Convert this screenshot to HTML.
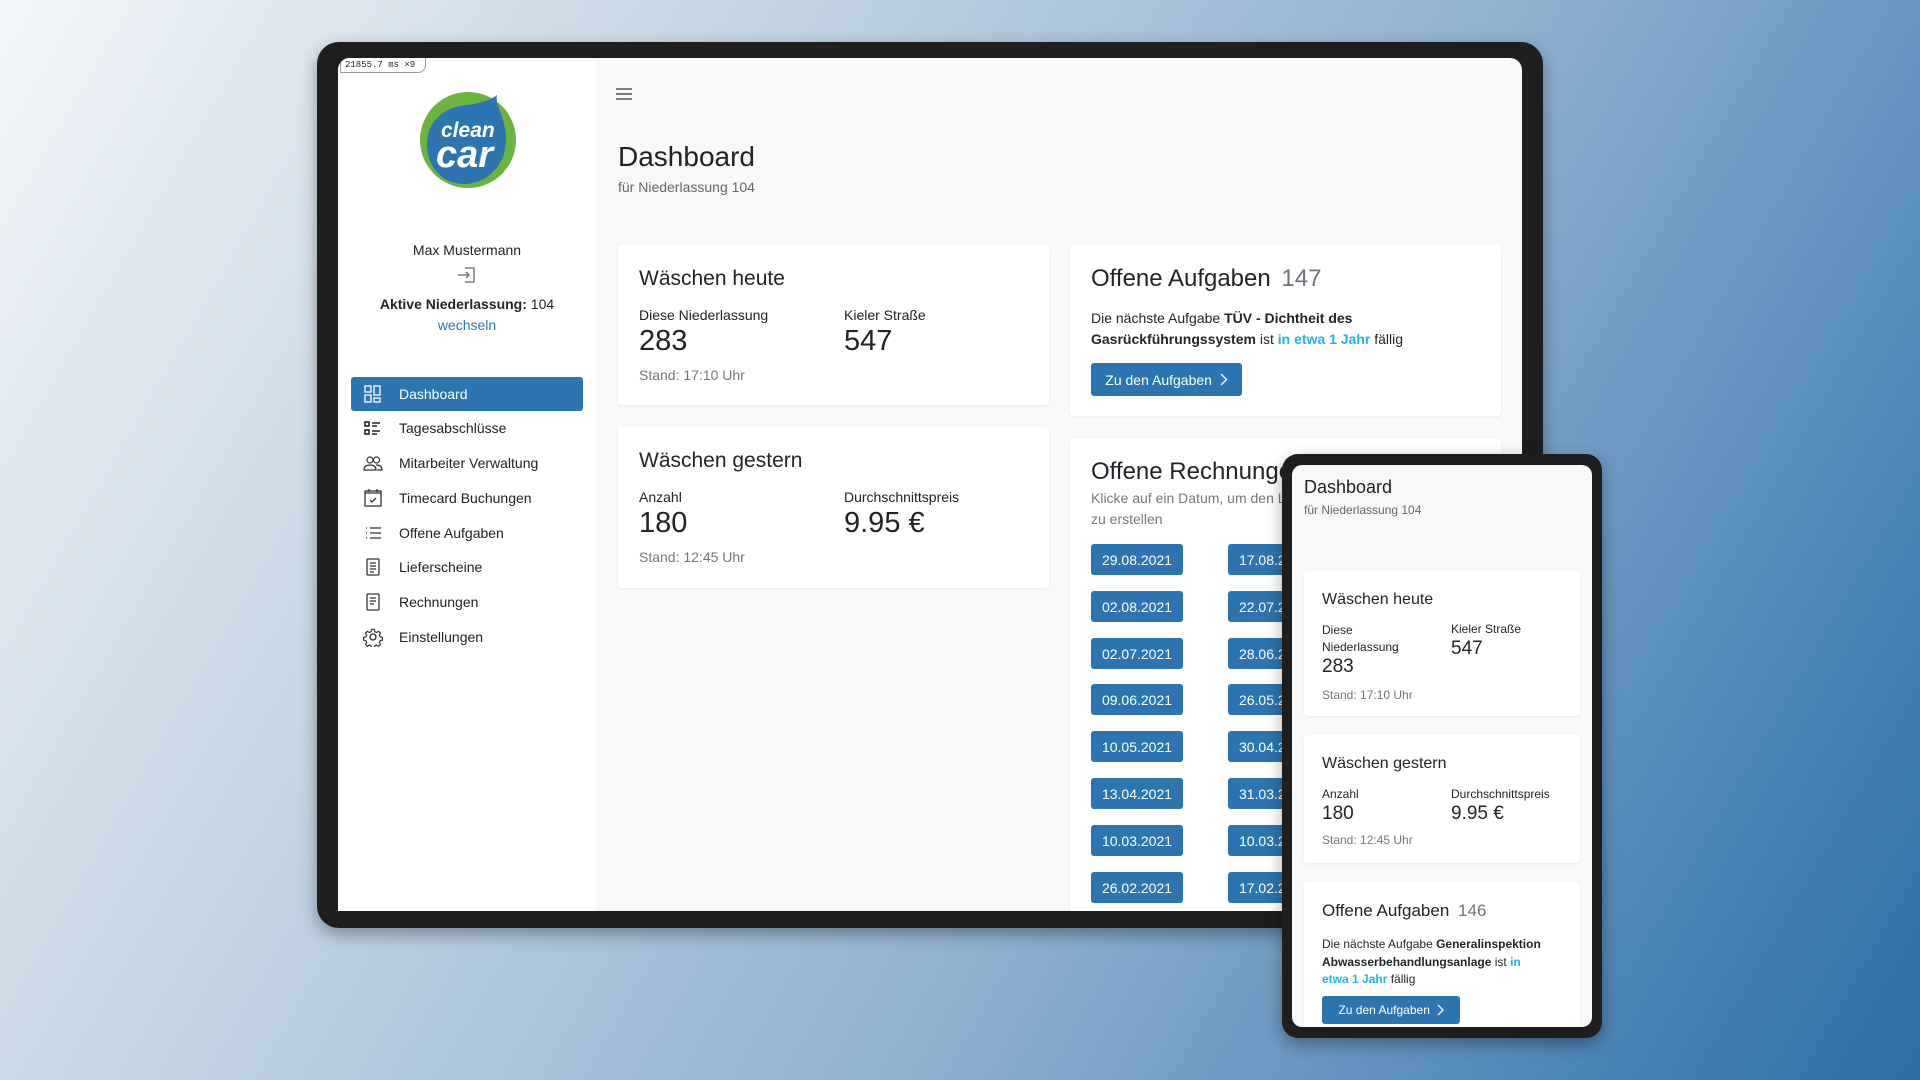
<!DOCTYPE html>
<html><head><meta charset="utf-8"><style>
*{box-sizing:border-box;margin:0;padding:0}
body{width:1920px;height:1080px;overflow:hidden;position:relative;font-family:"Liberation Sans",sans-serif;color:#212529;background:linear-gradient(120deg,#f2f5f8 0%,#c2d4e3 30%,#8fb1cf 60%,#5087b6 85%,#2f6da5 100%)}
.abs{position:absolute}
.frame{background:#1e1e1e;border-radius:22px;box-shadow:0 6px 16px rgba(0,0,0,.35)}
.scr{overflow:hidden;background:#f7f8fa}
.card{position:absolute;background:#fff;border-radius:4px;box-shadow:0 1px 3px rgba(0,0,0,.06)}
.btn{position:absolute;background:#2c75b0;color:#fff;border-radius:3px;font-size:14px;display:flex;align-items:center;justify-content:center}
.nav{position:absolute;left:13px;width:232px;height:34px;display:flex;align-items:center;font-size:14px;color:#222}
.nav svg{position:absolute;left:12px}
.nav span{position:absolute;left:48px}
.lbl{font-size:14px;color:#222}
.num{font-size:29px;color:#222}
.st{font-size:14px;color:#777}
.blue{color:#1fb5e8;font-weight:bold}
</style></head><body>
<div class="abs frame" style="left:317px;top:42px;width:1226px;height:886px"></div>
<div class="abs scr" style="left:338px;top:58px;width:1184px;height:853px;border-radius:12px 12px 0 0">
  <div class="abs" style="left:0;top:0;width:258px;height:853px;background:#fff">
    <div class="abs" style="left:2px;top:0;width:86px;height:15px;border:1px solid #999;border-top:none;border-radius:0 0 8px 0;font-family:'Liberation Mono',monospace;font-size:9px;line-height:12px;padding:1px 4px;background:#fff;white-space:nowrap">21855.7 ms ×9</div>
    <svg class="abs" style="left:81px;top:33px" width="98" height="98" viewBox="0 0 98 98">
      <circle cx="49" cy="49" r="48" fill="#6db33f"/>
      <path d="M49 14 C62 12 72 9 78 4 C76 14 84 22 86 38 C92 70 70 93 45 93 C22 93 8 75 8 53 C8 30 26 15 49 14Z" fill="#2c75b0"/>
      <text x="22" y="46" font-family="Liberation Sans" font-weight="bold" font-style="italic" font-size="21" fill="#fff">clean</text>
      <text x="17" y="76" font-family="Liberation Sans" font-weight="bold" font-style="italic" font-size="38" fill="#fff">car</text>
    </svg>
    <div class="abs" style="left:0;width:258px;top:184px;text-align:center;font-size:14px">Max Mustermann</div>
    <svg class="abs" style="left:119px;top:208px" width="20" height="18" viewBox="0 0 20 18" fill="none" stroke="#666" stroke-width="1.3"><path d="M8 2h9v14H8"/><path d="M1 9h11M9 6l3 3-3 3"/></svg>
    <div class="abs" style="left:0;width:258px;top:238px;text-align:center;font-size:14px"><b>Aktive Niederlassung:</b> 104</div>
    <div class="abs" style="left:0;width:258px;top:259px;text-align:center;font-size:14px;color:#2c75b0">wechseln</div>
    <div class="nav" style="top:319px;background:#2c75b0;color:#fff;border-radius:3px"><svg width="20" height="20" viewBox="0 0 20 20" fill="none" stroke="#fff" stroke-width="1.3"><rect x="2" y="2" width="6" height="6"/><rect x="2" y="11" width="6" height="7"/><rect x="11" y="2" width="6" height="9"/><rect x="11" y="14" width="6" height="4"/></svg><span>Dashboard</span></div>
    <div class="nav" style="top:353px"><svg width="20" height="20" viewBox="0 0 20 20" fill="none" stroke="#222" stroke-width="1.6"><rect x="2" y="4" width="4" height="4"/><rect x="2" y="12" width="4" height="4"/><path d="M9 5h8M9 8h5M9 13h8M9 16h5"/></svg><span>Tagesabschlüsse</span></div>
    <div class="nav" style="top:388px"><svg width="20" height="20" viewBox="0 0 20 20" fill="none" stroke="#333" stroke-width="1.2"><circle cx="7" cy="7" r="3"/><circle cx="13.5" cy="7" r="3"/><path d="M1 17c0-4 3-5 6-5s6 1 6 5zM13 12c3 0 6 1 6 5h-5"/></svg><span>Mitarbeiter Verwaltung</span></div>
    <div class="nav" style="top:423px"><svg width="20" height="20" viewBox="0 0 20 20" fill="none" stroke="#333" stroke-width="1.3"><rect x="2" y="3" width="16" height="15"/><path d="M2 5h16M6 1v3M14 1v3M7 12l2 2 4-4"/></svg><span>Timecard Buchungen</span></div>
    <div class="nav" style="top:458px"><svg width="20" height="20" viewBox="0 0 20 20" fill="none" stroke="#333" stroke-width="1.3"><path d="M3 5h1M3 10h1M3 15h1M7 5h11M7 10h11M7 15h11"/></svg><span>Offene Aufgaben</span></div>
    <div class="nav" style="top:492px"><svg width="20" height="20" viewBox="0 0 20 20" fill="none" stroke="#333" stroke-width="1.3"><rect x="4" y="2" width="12" height="16" rx="1"/><path d="M7 6h6M7 9h6M7 12h6M7 15h4"/></svg><span>Lieferscheine</span></div>
    <div class="nav" style="top:527px"><svg width="20" height="20" viewBox="0 0 20 20" fill="none" stroke="#333" stroke-width="1.3"><rect x="4" y="2" width="12" height="16" rx="1"/><path d="M7 6h6M7 9h6M7 12h4"/></svg><span>Rechnungen</span></div>
    <div class="nav" style="top:562px"><svg width="20" height="20" viewBox="0 0 20 20" fill="none" stroke="#333" stroke-width="1.3"><circle cx="10" cy="10" r="3"/><path d="M8.5 1.5h3l.5 2.5 2 1 2.3-1.3 2 2-1.3 2.3 1 2 2.5.5v3l-2.5.5-1 2 1.3 2.3-2 2-2.3-1.3-2 1-.5 2.5h-3l-.5-2.5-2-1-2.3 1.3-2-2 1.3-2.3-1-2-2.5-.5v-3l2.5-.5 1-2-1.3-2.3 2-2 2.3 1.3 2-1z" transform="scale(.9) translate(1.1 1.1)"/></svg><span>Einstellungen</span></div>
  </div>
  <svg class="abs" style="left:278px;top:29px" width="16" height="14" viewBox="0 0 16 14" stroke="#555" stroke-width="1.4"><path d="M0 2h16M0 7h16M0 12h16"/></svg>
  <div class="abs" style="left:280px;top:83px;font-size:28px;color:#222">Dashboard</div>
  <div class="abs" style="left:280px;top:121px;font-size:14px;color:#666">für Niederlassung 104</div>
  <div class="card" style="left:280px;top:187px;width:431px;height:160px">
    <div class="abs" style="left:21px;top:22px;font-size:21px">Wäschen heute</div>
    <div class="abs lbl" style="left:21px;top:62px">Diese Niederlassung</div>
    <div class="abs num" style="left:21px;top:80px">283</div>
    <div class="abs lbl" style="left:226px;top:62px">Kieler Straße</div>
    <div class="abs num" style="left:226px;top:80px">547</div>
    <div class="abs st" style="left:21px;top:122px">Stand: 17:10 Uhr</div>
  </div>
  <div class="card" style="left:280px;top:369px;width:431px;height:161px">
    <div class="abs" style="left:21px;top:22px;font-size:21px">Wäschen gestern</div>
    <div class="abs lbl" style="left:21px;top:62px">Anzahl</div>
    <div class="abs num" style="left:21px;top:80px">180</div>
    <div class="abs lbl" style="left:226px;top:62px">Durchschnittspreis</div>
    <div class="abs num" style="left:226px;top:80px">9.95 €</div>
    <div class="abs st" style="left:21px;top:122px">Stand: 12:45 Uhr</div>
  </div>
  <div class="card" style="left:732px;top:187px;width:431px;height:171px">
    <div class="abs" style="left:21px;top:20px;font-size:24px">Offene Aufgaben <span style="color:#6c757d;margin-left:4px">147</span></div>
    <div class="abs" style="left:21px;top:63px;font-size:14px;line-height:21px;width:400px">Die nächste Aufgabe <b>TÜV - Dichtheit des Gasrückführungssystem</b> ist <span class="blue">in etwa 1 Jahr</span> fällig</div>
    <div class="btn" style="left:21px;top:118px;width:151px;height:33px">Zu den Aufgaben&nbsp;&nbsp;<svg width="8" height="13" viewBox="0 0 8 13" fill="none" stroke="#fff" stroke-width="1.4"><path d="M1 1l5.5 5.5L1 12"/></svg></div>
  </div>
  <div class="card" style="left:732px;top:380px;width:431px;height:500px">
    <div class="abs" style="left:21px;top:20px;font-size:24px;white-space:nowrap">Offene Rechnungen</div>
    <div class="abs" style="left:21px;top:50px;font-size:14px;line-height:21px;color:#777;width:320px;white-space:nowrap">Klicke auf ein Datum, um den Lieferschein<br>zu erstellen</div>
    <div class="btn" style="left:21px;top:106px;width:92px;height:31px">29.08.2021</div>
    <div class="btn" style="left:21px;top:153px;width:92px;height:31px">02.08.2021</div>
    <div class="btn" style="left:21px;top:200px;width:92px;height:31px">02.07.2021</div>
    <div class="btn" style="left:21px;top:246px;width:92px;height:31px">09.06.2021</div>
    <div class="btn" style="left:21px;top:293px;width:92px;height:31px">10.05.2021</div>
    <div class="btn" style="left:21px;top:340px;width:92px;height:31px">13.04.2021</div>
    <div class="btn" style="left:21px;top:387px;width:92px;height:31px">10.03.2021</div>
    <div class="btn" style="left:21px;top:434px;width:92px;height:31px">26.02.2021</div>
    <div class="btn" style="left:158px;top:106px;width:92px;height:31px">17.08.2021</div>
    <div class="btn" style="left:158px;top:153px;width:92px;height:31px">22.07.2021</div>
    <div class="btn" style="left:158px;top:200px;width:92px;height:31px">28.06.2021</div>
    <div class="btn" style="left:158px;top:246px;width:92px;height:31px">26.05.2021</div>
    <div class="btn" style="left:158px;top:293px;width:92px;height:31px">30.04.2021</div>
    <div class="btn" style="left:158px;top:340px;width:92px;height:31px">31.03.2021</div>
    <div class="btn" style="left:158px;top:387px;width:92px;height:31px">10.03.2021</div>
    <div class="btn" style="left:158px;top:434px;width:92px;height:31px">17.02.2021</div>
  </div>
</div>
<div class="abs frame" style="left:1282px;top:454px;width:320px;height:584px;border-radius:16px"></div>
<div class="abs scr" style="left:1292px;top:465px;width:300px;height:562px;border-radius:10px">
  <div class="abs" style="left:12px;top:12px;font-size:18px;color:#222">Dashboard</div>
  <div class="abs" style="left:12px;top:38px;font-size:12px;color:#666">für Niederlassung 104</div>
  <div class="card" style="left:12px;top:106px;width:276px;height:145px">
    <div class="abs" style="left:18px;top:20px;font-size:16px">Wäschen heute</div>
    <div class="abs" style="left:18px;top:51px;font-size:12px;line-height:17px;width:100px">Diese Niederlassung</div>
    <div class="abs" style="left:18px;top:85px;font-size:19px">283</div>
    <div class="abs" style="left:147px;top:51px;font-size:12px">Kieler Straße</div>
    <div class="abs" style="left:147px;top:67px;font-size:19px">547</div>
    <div class="abs" style="left:18px;top:117px;font-size:12px;color:#777">Stand: 17:10 Uhr</div>
  </div>
  <div class="card" style="left:12px;top:270px;width:276px;height:128px">
    <div class="abs" style="left:18px;top:20px;font-size:16px">Wäschen gestern</div>
    <div class="abs" style="left:18px;top:52px;font-size:12px">Anzahl</div>
    <div class="abs" style="left:18px;top:68px;font-size:19px">180</div>
    <div class="abs" style="left:147px;top:52px;font-size:12px">Durchschnittspreis</div>
    <div class="abs" style="left:147px;top:68px;font-size:19px">9.95 €</div>
    <div class="abs" style="left:18px;top:98px;font-size:12px;color:#777">Stand: 12:45 Uhr</div>
  </div>
  <div class="card" style="left:12px;top:417px;width:276px;height:160px">
    <div class="abs" style="left:18px;top:19px;font-size:17px">Offene Aufgaben <span style="color:#6c757d;margin-left:4px">146</span></div>
    <div class="abs" style="left:18px;top:54px;font-size:12px;line-height:17.5px;width:222px">Die nächste Aufgabe <b>Generalinspektion Abwasserbehandlungsanlage</b> ist <span class="blue">in etwa 1 Jahr</span> fällig</div>
    <div class="btn" style="left:18px;top:114px;width:138px;height:28px;font-size:12px">Zu den Aufgaben&nbsp;&nbsp;<svg width="7" height="12" viewBox="0 0 7 12" fill="none" stroke="#fff" stroke-width="1.3"><path d="M1 1l5 5-5 5"/></svg></div>
  </div>
</div>
</body></html>
